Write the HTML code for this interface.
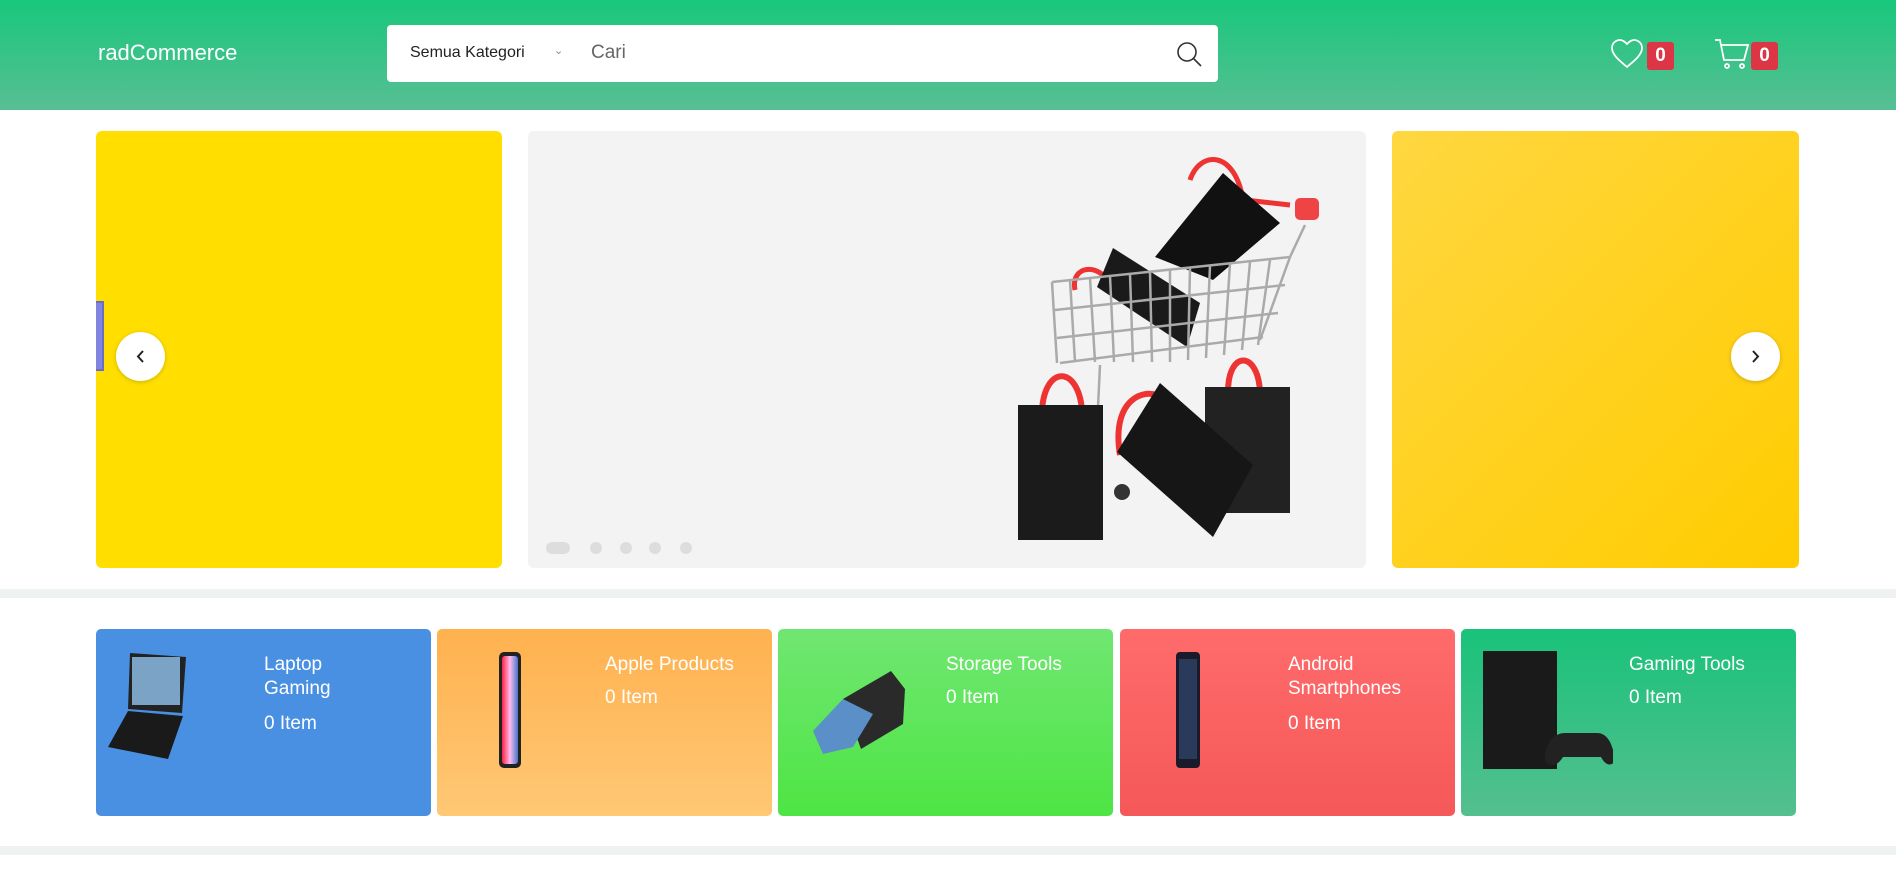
<!DOCTYPE html>
<html><head><meta charset="utf-8"><style>
*{margin:0;padding:0;box-sizing:border-box}
body{width:1896px;height:892px;background:#fff;font-family:"Liberation Sans",sans-serif;position:relative;overflow:hidden}
.hdr{position:absolute;left:0;top:0;width:1896px;height:110px;background:linear-gradient(#17c77b,#58bf94)}
.logo{position:absolute;left:98px;top:40px;color:#fff;font-size:22px}
.search{position:absolute;left:387px;top:25px;width:831px;height:57px;background:#fff;border-radius:4px}
.cat{position:absolute;left:23px;top:19px;font-size:16px;color:#222}
.chev{position:absolute;left:167px;top:19px;font-size:11px;color:#888}
.cari{position:absolute;left:204px;top:17px;font-size:19px;color:#666}
.badge{position:absolute;top:42px;width:27px;height:28px;background:#dc3545;border-radius:3px;color:#fff;font-weight:bold;font-size:19px;text-align:center;line-height:28px}
.panel{position:absolute;top:131px;height:437px;border-radius:6px;overflow:hidden}
.arrow{position:absolute;top:332px;width:49px;height:49px;border-radius:50%;background:#fff;box-shadow:0 1px 4px rgba(0,0,0,.2)}
.band{position:absolute;left:0;width:1896px;height:9px;background:#eef2f0}
.card{position:absolute;top:629px;width:335px;height:187px;border-radius:5px;overflow:hidden;color:#fff}
.card .t{position:absolute;left:168px;top:24px;font-size:19px;line-height:24px}
.card .n{position:absolute;left:168px;font-size:19px}
.dot{position:absolute;top:542px;width:12px;height:12px;border-radius:50%;background:#ddd}
</style></head><body>
<div class="hdr">
<div class="logo">radCommerce</div>
<div class="search"><span class="cat">Semua Kategori</span><span class="chev">&#8964;</span><span class="cari">Cari</span>
<svg style="position:absolute;left:788px;top:15px" width="28" height="28" viewBox="0 0 28 28" fill="none" stroke="#333" stroke-width="1.6"><circle cx="12" cy="12" r="9"/><path d="M18.5 18.5L26 26"/></svg></div>
<svg style="position:absolute;left:1610px;top:38px" width="34" height="32" viewBox="0 0 34 32" fill="none" stroke="#fff" stroke-width="1.8"><path d="M17 29C10 23 2 17 2 10 2 5 6 2 10 2c3 0 5 2 7 4 2-2 4-4 7-4 4 0 8 3 8 8 0 7-8 13-15 19z"/></svg>
<div class="badge" style="left:1647px">0</div>
<svg style="position:absolute;left:1714px;top:38px" width="36" height="32" viewBox="0 0 36 32" fill="none" stroke="#fff" stroke-width="1.8"><path d="M1 2h5l4 20h20l4-15H8"/><circle cx="13" cy="28" r="2"/><circle cx="28" cy="28" r="2"/></svg>
<div class="badge" style="left:1751px">0</div>
</div>

<div class="panel" style="left:96px;width:406px;background:#ffde00">
<div style="position:absolute;left:-6px;top:170px;width:14px;height:70px;border:2px solid #6a6cc6;background:#8086e0"></div>
</div>
<div class="panel" style="left:528px;width:838px;background:#f3f3f3">
<svg width="838" height="437" viewBox="528 131 838 437" style="position:absolute;left:0;top:0">
<path d="M1190 180C1200 150 1235 150 1243 200M1245 200L1290 205" stroke="#e33" stroke-width="5" fill="none"/>
<rect x="1295" y="198" width="24" height="22" fill="#e44" rx="5"/>
<path d="M1075 290C1070 265 1100 262 1110 285" stroke="#e33" stroke-width="5" fill="none"/>
<polygon points="1097,287 1113,248 1200,303 1187,347" fill="#1a1a1a"/>
<polygon points="1155,257 1223,173 1280,223 1213,280" fill="#111"/>
<g stroke="#aaa" stroke-width="2.5" fill="none">
<path d="M1052 282L1290 257 1305 225"/><path d="M1055 310L1285 285"/><path d="M1057 338L1278 313"/><path d="M1060 363L1263 337"/>
<path d="M1052 282L1057 363M1070 280L1075 362M1090 278L1095 362M1110 276L1114 362M1130 274L1133 362M1150 272L1152 362M1170 270L1170 362M1190 268L1188 360M1210 266L1206 358M1230 264L1224 355M1250 262L1242 350M1270 260L1258 345M1290 257L1260 340"/>
<path d="M1100 365L1095 470"/>
</g>
<path d="M1042 410C1045 365 1078 365 1082 410" stroke="#e33" stroke-width="6" fill="none"/>
<rect x="1018" y="405" width="85" height="135" fill="#1b1b1b"/>
<path d="M1228 392C1228 350 1258 350 1260 392" stroke="#e33" stroke-width="6" fill="none"/>
<path d="M1120 455C1110 395 1150 385 1165 400" stroke="#e33" stroke-width="6" fill="none"/>
<rect x="1205" y="387" width="85" height="126" fill="#222"/>
<polygon points="1117,452 1160,383 1253,465 1213,537" fill="#161616"/>
<circle cx="1122" cy="492" r="8" fill="#333"/>
</svg>
<div style="position:absolute;left:18px;top:411px;width:24px;height:12px;border-radius:6px;background:#ddd"></div>
</div>
<div class="dot" style="left:590px"></div><div class="dot" style="left:620px"></div><div class="dot" style="left:649px"></div><div class="dot" style="left:680px"></div>
<div class="panel" style="left:1392px;width:407px;background:linear-gradient(135deg,#ffd740,#ffcc00)"></div>
<div class="arrow" style="left:116px"><svg width="49" height="49" viewBox="0 0 49 49" fill="none" stroke="#222" stroke-width="2"><path d="M27 19l-5 5.5 5 5.5"/></svg></div>
<div class="arrow" style="left:1731px"><svg width="49" height="49" viewBox="0 0 49 49" fill="none" stroke="#222" stroke-width="2"><path d="M22 19l5 5.5-5 5.5"/></svg></div>

<div class="band" style="top:589px"></div>

<div class="card" style="left:96px;background:#4a90e2">
<svg style="position:absolute;left:12px;top:22px" width="120" height="110"><polygon points="22,2 78,6 74,62 20,58" fill="#222"/><rect x="24" y="6" width="48" height="48" fill="#7aa3c6"/><polygon points="20,60 75,65 60,108 0,96" fill="#1a1a1a"/></svg>
<div class="t">Laptop<br>Gaming</div><div class="n" style="top:84px">0 Item</div></div>
<div class="card" style="left:437px;background:linear-gradient(#ffb14f,#ffc874)">
<svg style="position:absolute;left:60px;top:22px" width="40" height="120"><rect x="2" y="1" width="22" height="116" rx="5" fill="#222"/><rect x="5" y="5" width="16" height="108" rx="3" fill="url(#g)"/><defs><linearGradient id="g" x1="0" x2="1"><stop offset="0" stop-color="#f24"/><stop offset=".5" stop-color="#fbe"/><stop offset="1" stop-color="#47c"/></linearGradient></defs></svg>
<div class="t">Apple Products</div><div class="n" style="top:58px">0 Item</div></div>
<div class="card" style="left:778px;background:linear-gradient(#70e672,#4ee544)">
<svg style="position:absolute;left:25px;top:40px" width="120" height="90"><polygon points="40,30 88,2 102,20 100,55 58,80" fill="#2a2a2a"/><polygon points="10,62 40,30 70,45 50,78 20,85" fill="#5a8fc8"/></svg>
<div class="t">Storage Tools</div><div class="n" style="top:58px">0 Item</div></div>
<div class="card" style="left:1120px;background:linear-gradient(#ff6b6b,#f55858)">
<svg style="position:absolute;left:54px;top:22px" width="30" height="120"><rect x="2" y="1" width="24" height="116" rx="4" fill="#1a1a2a"/><rect x="5" y="8" width="18" height="100" fill="#2a3a5a"/></svg>
<div class="t">Android<br>Smartphones</div><div class="n" style="top:84px">0 Item</div></div>
<div class="card" style="left:1461px;background:linear-gradient(#19c27a,#55bf8f)">
<svg style="position:absolute;left:22px;top:22px" width="130" height="130"><rect x="0" y="0" width="74" height="118" fill="#1a1a1a"/><path d="M62 110c0-20 10-28 20-28h32c10 0 16 10 18 28-4 6-10 4-14-4H80c-6 10-14 10-18 4z" fill="#222"/></svg>
<div class="t">Gaming Tools</div><div class="n" style="top:58px">0 Item</div></div>

<div class="band" style="top:846px"></div>
</body></html>
